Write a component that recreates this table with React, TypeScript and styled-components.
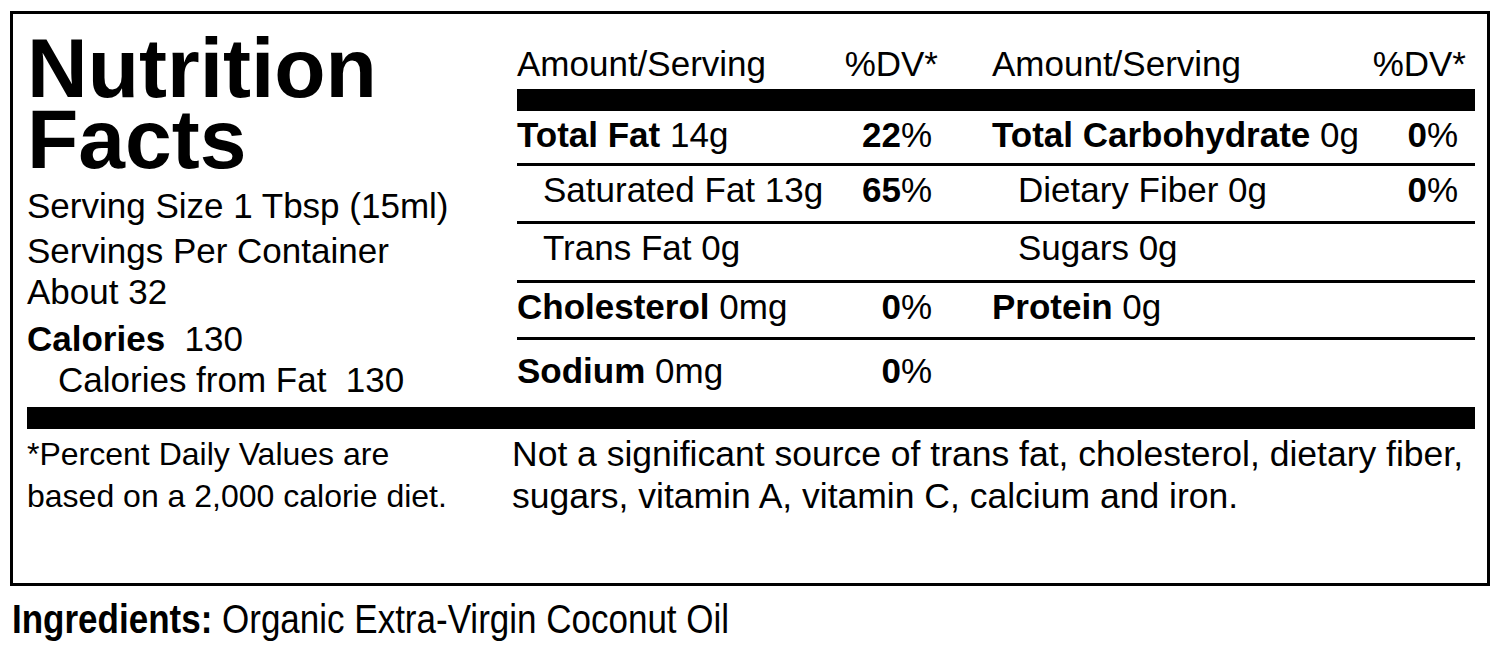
import React from "react";
import styled, { createGlobalStyle } from "styled-components";

const GlobalStyle = createGlobalStyle`
  html, body { margin: 0; padding: 0; background: #ffffff; }
  body { font-family: "Liberation Sans", Arial, Helvetica, sans-serif; color: #000000; }
  * { box-sizing: border-box; }
`;

const Page = styled.div`
  width: 1500px;
  height: 656px;
  padding: 11px 10px 0 10px;
  overflow: hidden;
`;

const Label = styled.section`
  border: 3px solid #000;
  height: 575px;
  padding: 0 12px 0 14px;
`;

const Top = styled.div`
  display: grid;
  grid-template-columns: 490px 958px;
  height: 393px;
`;

const Side = styled.div`
  padding-top: 19px;
`;

const Title = styled.h1`
  margin: 0;
  font-size: 84px;
  font-weight: 700;
  line-height: 71px;
`;

const InfoLine = styled.div<{ $mt?: number; $indent?: number }>`
  font-size: 35px;
  line-height: 41px;
  white-space: pre;
  margin-top: ${(p) => p.$mt ?? 0}px;
  padding-left: ${(p) => p.$indent ?? 0}px;
`;

const Table = styled.div`
  display: flex;
  flex-direction: column;
`;

const HeadRow = styled.div`
  display: grid;
  grid-template-columns: 475px 483px;
  padding: 30px 0 5px;
  font-size: 35px;
  line-height: 40px;
`;

const HeadCell = styled.div<{ $pr: number }>`
  display: flex;
  justify-content: space-between;
  padding-right: ${(p) => p.$pr}px;
`;

const ThickRule = styled.div`
  height: 22px;
  background: #000;
`;

const Row = styled.div<{ $h: number; $pt?: number; $last?: boolean }>`
  display: grid;
  grid-template-columns: 475px 483px;
  height: ${(p) => p.$h}px;
  padding-top: ${(p) => p.$pt ?? 0}px;
  border-bottom: ${(p) => (p.$last ? "none" : "3px solid #000")};
  font-size: 35px;
  line-height: 48px;
`;

const Cell = styled.div<{ $indent?: number; $pr: number }>`
  display: flex;
  justify-content: space-between;
  white-space: pre;
  padding-left: ${(p) => p.$indent ?? 0}px;
  padding-right: ${(p) => p.$pr}px;
`;

const Footer = styled.div`
  display: grid;
  grid-template-columns: 485px 963px;
  margin-top: 4px;
  line-height: 42px;
`;

const FootLeft = styled.p`
  margin: 0;
  font-size: 32px;
`;

const FootRight = styled.p`
  margin: 0;
  font-size: 35.5px;
`;

const Ingredients = styled.p`
  margin: 10px 0 0;
  padding-left: 2px;
  font-size: 40px;
  line-height: 46px;
  white-space: pre;
`;

const Condensed = styled.span`
  display: inline-block;
  transform: scaleX(0.875);
  transform-origin: left center;
`;

type Nutrient = {
  name: string;
  amount: string;
  bold?: boolean;
  dv?: string;
  sub?: boolean;
};

const rows: { h: number; pt?: number; left: Nutrient; right?: Nutrient }[] = [
  {
    h: 55,
    left: { name: "Total Fat", amount: "14g", bold: true, dv: "22" },
    right: { name: "Total Carbohydrate", amount: "0g", bold: true, dv: "0" },
  },
  {
    h: 58,
    left: { name: "Saturated Fat", amount: "13g", sub: true, dv: "65" },
    right: { name: "Dietary Fiber", amount: "0g", sub: true, dv: "0" },
  },
  {
    h: 59,
    left: { name: "Trans Fat", amount: "0g", sub: true },
    right: { name: "Sugars", amount: "0g", sub: true },
  },
  {
    h: 57,
    left: { name: "Cholesterol", amount: "0mg", bold: true, dv: "0" },
    right: { name: "Protein", amount: "0g", bold: true },
  },
  {
    h: 67,
    pt: 7,
    left: { name: "Sodium", amount: "0mg", bold: true, dv: "0" },
  },
];

function NutrientCell({ n, pr }: { n?: Nutrient; pr: number }) {
  if (!n) return <Cell $pr={pr} />;
  return (
    <Cell $indent={n.sub ? 26 : 0} $pr={pr}>
      <span>
        {n.bold ? <b>{n.name}</b> : n.name} {n.amount}
      </span>
      {n.dv !== undefined && (
        <span>
          <b>{n.dv}</b>%
        </span>
      )}
    </Cell>
  );
}

export default function App() {
  return (
    <>
      <GlobalStyle />
      <Page>
        <Label>
          <Top>
            <Side>
              <Title>
                Nutrition
                <br />
                Facts
              </Title>
              <InfoLine $mt={10}>Serving Size 1 Tbsp (15ml)</InfoLine>
              <InfoLine $mt={4}>
                Servings Per Container
                {"\n"}About 32
              </InfoLine>
              <InfoLine $mt={6}>
                <b>Calories</b>{"  "}130
              </InfoLine>
              <InfoLine $indent={31}>Calories from Fat{"  "}130</InfoLine>
            </Side>
            <Table>
              <HeadRow>
                <HeadCell $pr={54}>
                  <span>Amount/Serving</span>
                  <span>%DV*</span>
                </HeadCell>
                <HeadCell $pr={9}>
                  <span>Amount/Serving</span>
                  <span>%DV*</span>
                </HeadCell>
              </HeadRow>
              <ThickRule />
              {rows.map((r, i) => (
                <Row key={i} $h={r.h} $pt={r.pt} $last={i === rows.length - 1}>
                  <NutrientCell n={r.left} pr={60} />
                  <NutrientCell n={r.right} pr={17} />
                </Row>
              ))}
            </Table>
          </Top>
          <ThickRule />
          <Footer>
            <FootLeft>
              *Percent Daily Values are
              <br />
              based on a 2,000 calorie diet.
            </FootLeft>
            <FootRight>
              Not a significant source of trans fat, cholesterol, dietary fiber,
              <br />
              sugars, vitamin A, vitamin C, calcium and iron.
            </FootRight>
          </Footer>
        </Label>
        <Ingredients>
          <Condensed>
            <b>Ingredients:</b> Organic Extra-Virgin Coconut Oil
          </Condensed>
        </Ingredients>
      </Page>
    </>
  );
}
